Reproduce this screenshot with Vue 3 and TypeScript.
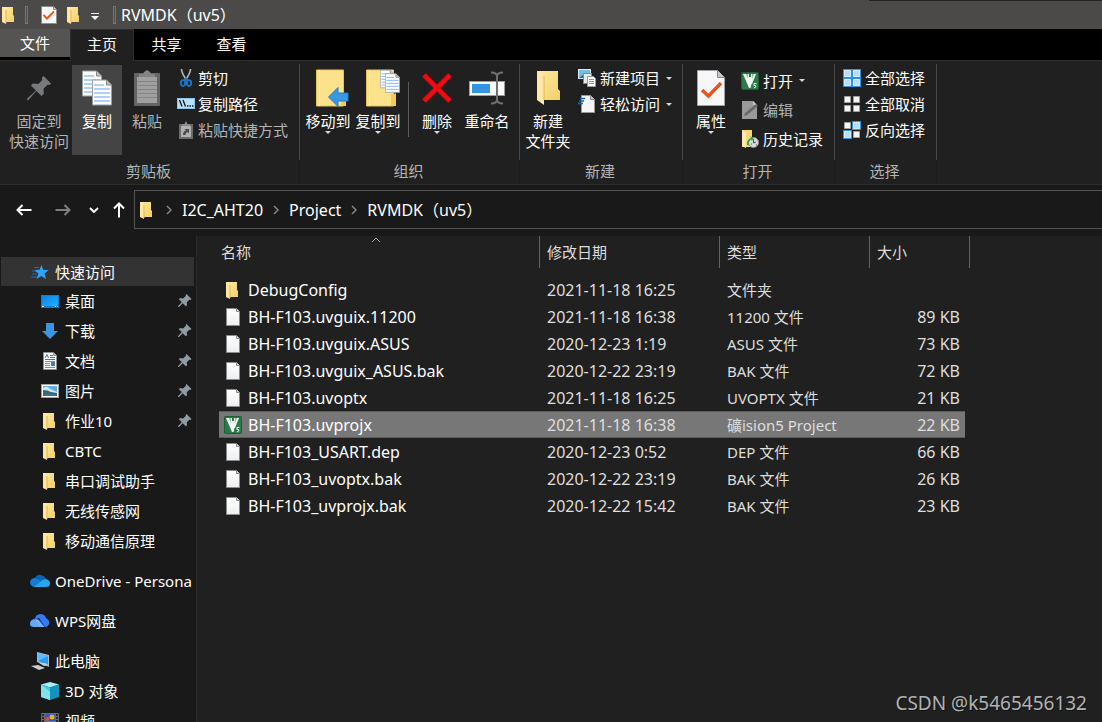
<script setup lang="ts">
import { ref } from 'vue'

interface NavItem {
  label: string
  icon: string
  level: 1 | 2
  pinned?: boolean
  gap?: boolean
}

interface FileRow {
  name: string
  icon: string
  date: string
  type: string
  size: string
}

const tabs: string[] = ['主页', '共享', '查看']
const crumbs: string[] = ['I2C_AHT20', 'Project', 'RVMDK（uv5）']

const nav: NavItem[] = [
  { label: '快速访问', icon: 'star', level: 1 },
  { label: '桌面', icon: 'desktop', level: 2, pinned: true },
  { label: '下载', icon: 'download', level: 2, pinned: true },
  { label: '文档', icon: 'document', level: 2, pinned: true },
  { label: '图片', icon: 'picture', level: 2, pinned: true },
  { label: '作业10', icon: 'folder', level: 2, pinned: true },
  { label: 'CBTC', icon: 'folder', level: 2 },
  { label: '串口调试助手', icon: 'folder', level: 2 },
  { label: '无线传感网', icon: 'folder', level: 2 },
  { label: '移动通信原理', icon: 'folder', level: 2 },
  { label: 'OneDrive - Persona', icon: 'onedrive', level: 1, gap: true },
  { label: 'WPS网盘', icon: 'wps', level: 1, gap: true },
  { label: '此电脑', icon: 'computer', level: 1, gap: true },
  { label: '3D 对象', icon: 'cube', level: 2 },
  { label: '视频', icon: 'video', level: 2 },
]

const files: FileRow[] = [
  { name: 'DebugConfig', icon: 'folder', date: '2021-11-18 16:25', type: '文件夹', size: '' },
  { name: 'BH-F103.uvguix.11200', icon: 'file', date: '2021-11-18 16:38', type: '11200 文件', size: '89 KB' },
  { name: 'BH-F103.uvguix.ASUS', icon: 'file', date: '2020-12-23 1:19', type: 'ASUS 文件', size: '73 KB' },
  { name: 'BH-F103.uvguix_ASUS.bak', icon: 'file', date: '2020-12-22 23:19', type: 'BAK 文件', size: '72 KB' },
  { name: 'BH-F103.uvoptx', icon: 'file', date: '2021-11-18 16:25', type: 'UVOPTX 文件', size: '21 KB' },
  { name: 'BH-F103.uvprojx', icon: 'keil', date: '2021-11-18 16:38', type: '礦ision5 Project', size: '22 KB' },
  { name: 'BH-F103_USART.dep', icon: 'file', date: '2020-12-23 0:52', type: 'DEP 文件', size: '66 KB' },
  { name: 'BH-F103_uvoptx.bak', icon: 'file', date: '2020-12-22 23:19', type: 'BAK 文件', size: '26 KB' },
  { name: 'BH-F103_uvprojx.bak', icon: 'file', date: '2020-12-22 15:42', type: 'BAK 文件', size: '23 KB' },
]

const activeTab = ref('主页')
const selected = ref('BH-F103.uvprojx')
</script>

<template>
  <div class="explorer">
    <svg class="sprite" aria-hidden="true">
      <defs>
        <linearGradient id="gFolder" x1="0" y1="0" x2="1" y2="1">
          <stop offset="0" stop-color="#ffe9a2" />
          <stop offset="1" stop-color="#f3cf66" />
        </linearGradient>
        <linearGradient id="gBlue" x1="0" y1="0" x2="1" y2="1">
          <stop offset="0" stop-color="#0a84e8" />
          <stop offset="1" stop-color="#1fb0ff" />
        </linearGradient>
        <linearGradient id="gPage" x1="0" y1="0" x2="0" y2="1">
          <stop offset="0" stop-color="#ffffff" />
          <stop offset="1" stop-color="#eceff1" />
        </linearGradient>
      </defs>
      <symbol id="folder" viewBox="0 0 18 18">
        <path d="M3 1h10v8l1 1v6H5z" fill="url(#gFolder)" />
        <path d="M2 1h2l2 3v14l-4-2z" fill="#ffe7a0" />
        <path d="M6 4v13" stroke="#dfb950" stroke-width="1" />
      </symbol>
      <symbol id="file" viewBox="0 0 18 18">
        <path d="M2.500.5h10l3 3v14h-13z" fill="url(#gPage)" stroke="#8b8b8b" />
        <path d="M12.500.5v3h3" fill="#ddd" stroke="#8b8b8b" />
      </symbol>
      <symbol id="keil" viewBox="0 0 18 18">
        <rect width="18" height="18" rx="2" fill="#1c5e36" />
        <rect x="1" y="1" width="16" height="16" rx="1" fill="#2d7a49" />
        <path d="M2 2h3.500l1 5V2H8v3h2V2h1.500v5l1-5H15l-4 10H10.500l-1 4H8z" fill="#f2f7f3" />
        <path d="M15.500 11.500h-2.500v2h1.500q1.500 1.500-1.500 2.500" fill="none" stroke="#f2f7f3" />
      </symbol>
      <symbol id="propsSmall" viewBox="0 0 16 18">
        <path d="M.5.500h12l3 3v14H.500z" fill="#f7f7f8" stroke="#8b8b8b" />
        <path d="M12.500.5v3h3" fill="#ccc" stroke="#8b8b8b" />
        <path d="M2.500 9l3.500 3.500 7-7" fill="none" stroke="#e85a1c" stroke-width="2" />
      </symbol>
      <symbol id="pin" viewBox="0 0 14 14">
        <path d="M8.500 0l5 5-1.200 1-1-.3-2.500 2.500.3 3-1.300 1.100L4.700 9.200 1 13H0v-.8l3.800-4.100L.8 5.200l1.200-1.100 3 .3 3-2.600-.3-1z" fill="#8f9aa3" />
      </symbol>
      <symbol id="pinBig" viewBox="0 0 26 26">
        <path d="M17.500 1L25 8.500l-1.500 1.600-2-.4-4 4 .3 5.300-2.300 2.100-5.200-5L2.500 25l-1.500.2.300-1.600 8.600-8-5-5 2.100-2.100 5.300.4 4-4-.5-2.200z" fill="#77797b" />
      </symbol>
      <symbol id="sheet" viewBox="0 0 20 26">
        <path d="M.5.500h14l5 5v20H.500z" fill="#fafcff" stroke="#9a9a9a" />
        <path d="M14.500.5v5h5" fill="#bbb" stroke="#8b8b8b" />
        <path d="M2 5.500h10M2 9.500h16M2 13.500h16M2 17.500h16M2 21.500h16" stroke="#68a3ef" />
      </symbol>
      <symbol id="copy" viewBox="0 0 30 36">
        <use href="#sheet" x="0" y="0" width="20" height="27" />
        <use href="#sheet" x="10" y="9" width="20" height="27" />
      </symbol>
      <symbol id="paste" viewBox="0 0 26 36">
        <rect x="0" y="3" width="26" height="33" rx="1" fill="#656565" />
        <rect x="3" y="7" width="20" height="26" fill="#a0a0a0" />
        <path d="M3 11.500h20M3 15.500h20M3 19.500h20M3 23.500h20M3 27.500h20" stroke="#858585" />
        <path d="M5 7V4h4l1-2 3-2 3 2 1 2h4v3z" fill="#858585" />
      </symbol>
      <symbol id="cut" viewBox="0 0 18 18">
        <path d="M4.500 0q0 4 5 11M13.500 0q0 4-5 11" fill="none" stroke="#b6b9bc" stroke-width="1.600" />
        <ellipse cx="6" cy="14" rx="2.200" ry="2.800" fill="none" stroke="#1979c9" stroke-width="1.800" />
        <ellipse cx="12" cy="14" rx="2.200" ry="2.800" fill="none" stroke="#1979c9" stroke-width="1.800" />
        <path d="M7 12l2-2.500 2 2.500" fill="none" stroke="#1979c9" stroke-width="2" />
      </symbol>
      <symbol id="path" viewBox="0 0 18 18">
        <rect x=".5" y="3.500" width="17" height="10" fill="#b9e0fb" stroke="#8cc4ec" />
        <path d="M2.500 5l2.500 6.500M6 5l2.500 6.500M10 11h1.500M12.500 11h1.500M15 11h1.500" stroke="#1b1b1b" stroke-width="1.400" />
      </symbol>
      <symbol id="shortcut" viewBox="0 0 18 18">
        <path d="M2 3h14v15H2z" fill="#6c6c6c" />
        <path d="M4 5h10v11H4z" fill="#b1b1b1" />
        <path d="M5 5V3h2.500L9 0l1.500 3H13v2z" fill="#8c8c8c" />
        <path d="M6 14q0-4 3-4.500L7.500 8H12v4.500L10.500 11Q8.500 11.500 8.500 14z" fill="#4b4b4b" />
      </symbol>
      <symbol id="folderTall" viewBox="0 0 38 38">
        <path d="M.5 1h27v36H.500z" fill="#fde28c" stroke="#e8c25a" />
        <path d="M3.500 1v36" stroke="#ffeeb8" stroke-width="1" />
        <path d="M25 25h3l2-1v13h-5z" fill="#f1ca5b" />
      </symbol>
      <symbol id="moveTo" viewBox="0 0 38 38">
        <use href="#folderTall" width="38" height="38" />
        <path d="M12.500 28L22 18.500V24h10v8H22v5.500z" fill="#3798e5" stroke="#1f7ecb" />
      </symbol>
      <symbol id="copyTo" viewBox="0 0 38 38">
        <use href="#folderTall" y="0" width="38" height="38" />
        <use href="#sheet" x="14" y="0" width="14" height="20" />
        <use href="#sheet" x="19" y="4" width="15" height="20" />
      </symbol>
      <symbol id="delete" viewBox="0 0 30 30">
        <path d="M2 2l26 26M28 2L2 28" stroke="#a20b10" stroke-width="5.500" />
        <path d="M2 2l26 26M28 2L2 28" stroke="#ec0c13" stroke-width="4" />
      </symbol>
      <symbol id="rename" viewBox="0 0 36 34">
        <rect x=".5" y="10.500" width="35" height="14" fill="#f7f9fb" stroke="#9c9c9c" />
        <rect x="3" y="13" width="18" height="9" fill="#3395e4" />
        <path d="M22 1.500q6 0 6 4v23q0 4-6 4M34 1.500q-6 0-6 4v23q0 4 6 4" fill="none" stroke="#707070" stroke-width="2" />
      </symbol>
      <symbol id="newFolder" viewBox="0 0 24 36">
        <path d="M1 1h21v18l2 2v9H7z" fill="url(#gFolder)" />
        <path d="M1 1l7 5v29l-7-5z" fill="#ffe8a5" />
        <path d="M8 6v24" stroke="#dcb84f" />
      </symbol>
      <symbol id="newItem" viewBox="0 0 18 18">
        <rect x=".5" y=".5" width="12" height="9" fill="#76bce8" stroke="#d9edf8" />
        <path d="M1 9l5-4 4 4z" fill="#286e7a" />
        <rect x="5.500" y="4.500" width="8" height="10" fill="#e8ebed" stroke="#888" />
        <path d="M9.500 7.500h6l2 2v8h-8z" fill="#fff" stroke="#999" />
        <path d="M11 10.500h5M11 12.500h5M11 14.500h5" stroke="#8d91bd" />
      </symbol>
      <symbol id="easy" viewBox="0 0 18 18">
        <path d="M3.500.5h9l4 4v13h-13z" fill="#f4f6f7" stroke="#999" />
        <path d="M12.500.5v4h4" fill="#ccc" stroke="#888" />
        <path d="M2 3.500h5M1 6h5M0 8.500h5" stroke="#1767ad" stroke-width="1.400" />
      </symbol>
      <symbol id="properties" viewBox="0 0 28 36">
        <path d="M.5.500h20l7 7v28H.500z" fill="#f7f7f9" stroke="#a3a3a3" />
        <path d="M20.500.5v7h7" fill="#c7c7c7" stroke="#898989" />
        <path d="M5 20l6.500 6L24 13" fill="none" stroke="#e8551a" stroke-width="3.500" />
      </symbol>
      <symbol id="edit" viewBox="0 0 18 18">
        <path d="M1 0h11l4 4v14H1z" fill="#999" />
        <path d="M12 0v4h4" fill="#c5c5c5" />
        <path d="M3 15l1-3L15 3l2 2L6 14z" fill="#696969" />
      </symbol>
      <symbol id="history" viewBox="0 0 18 18">
        <path d="M1 0h10v17H1z" fill="#f7d87c" />
        <path d="M1 0l4 3v15l-4-2z" fill="#ffebae" />
        <circle cx="12.500" cy="12.500" r="5" fill="#d9dcdd" stroke="#8c9092" />
        <path d="M12.500 9v4l2.500-1M10 14h1M15 15h1" stroke="#555" fill="none" />
        <path d="M6 15q-1-5 4-7l-1-1.500 4 1-2 3.500-1-1.500q-3 2-2 6z" fill="#34a845" />
      </symbol>
      <symbol id="selectAll" viewBox="0 0 18 18">
        <rect width="18" height="18" fill="#3292e0" />
        <path d="M1.500 1.500h6v6h-6zM10.500 1.500h6v6h-6zM1.500 10.500h6v6h-6zM10.500 10.500h6v6h-6z" fill="#b7ddfb" stroke="#d8edfe" />
      </symbol>
      <symbol id="selectNone" viewBox="0 0 18 18">
        <path d="M1.500 1.500h6v6h-6zM10.500 1.500h6v6h-6zM1.500 10.500h6v6h-6zM10.500 10.500h6v6h-6z" fill="#f5f5f5" stroke="#a0a0a0" />
      </symbol>
      <symbol id="selectInvert" viewBox="0 0 18 18">
        <path d="M1.500 1.500h6v6h-6zM10.500 10.500h6v6h-6z" fill="#f5f5f5" stroke="#a0a0a0" />
        <path d="M9 0h9v9H9zM0 9h9v9H0z" fill="#3292e0" />
        <path d="M10.500 1.500h6v6h-6zM1.500 10.500h6v6h-6z" fill="#b7ddfb" stroke="#d8edfe" />
      </symbol>
      <symbol id="star" viewBox="0 0 18 18">
        <path d="M10.500 2l1.700 4.700 5.500.3-4.200 3.600 1.700 5.400-4.900-3-4.800 3 2-5.500L3 7l5.500-.3z" fill="#2fa5f2" />
        <path d="M3 4.500h5M1 8h4M1 11h5M0 14h6" stroke="#1371b8" stroke-width="1" />
      </symbol>
      <symbol id="desktop" viewBox="0 0 18 18">
        <rect x="0" y="3" width="18" height="13" fill="#0b7fda" />
        <rect x="1" y="4" width="16" height="10" fill="url(#gBlue)" />
        <path d="M1 14.500h2M14 14.500h1M16 14.500h1" stroke="#e6f5ff" />
      </symbol>
      <symbol id="download" viewBox="0 0 18 18">
        <path d="M5 1h8v8h4l-8 8-8-8h4z" fill="#3a96e2" />
      </symbol>
      <symbol id="document" viewBox="0 0 18 18">
        <path d="M2.500.5h10l3 3v14h-13z" fill="#f7f9fa" stroke="#919191" />
        <path d="M12.500.5v3h3" fill="#ccc" stroke="#919191" />
        <path d="M4 6l2-3.500L7.500 6M9 3.500h3M9 5.500h5M4 7.500h10" fill="none" stroke="#2480c4" />
        <path d="M4 9.500h10M4 11.500h5M4 13.500h5M4 15.500h10" stroke="#8a8a8a" />
        <path d="M10 10h4v4h-4z" fill="#457da4" />
      </symbol>
      <symbol id="picture" viewBox="0 0 18 18">
        <rect x=".5" y="2.500" width="17" height="13" fill="#fff" stroke="#a3a3a3" />
        <rect x="2" y="4" width="14" height="10" fill="#65aee4" />
        <path d="M2 6q4-3 7 1l7 3v2H2z" fill="#d5eaf3" />
        <path d="M2 8q5 0 8 2l6 1v3H2z" fill="#356b68" />
        <path d="M2 12h14v2H2z" fill="#3a6f9b" />
      </symbol>
      <symbol id="onedrive" viewBox="0 0 20 18">
        <path d="M5 6q2-4 6-3 4 1 5 4l-7 6z" fill="#0864b4" />
        <path d="M4 15q-4-1-4-5 1-4 5-4l4 2 5 6z" fill="#127cd6" />
        <path d="M16 7q4 1 4 4.500T16 15H4l6-5q3-3 6-3z" fill="#29a5ee" />
      </symbol>
      <symbol id="wps" viewBox="0 0 20 18">
        <path d="M5 7q0-4 5-5 5 0 6 4 4 2 3 6-1 3-4 3L9 6z" fill="#337bf5" />
        <path d="M4 7q4-2 6 2l5 6H9L5 10z" fill="#72b1fb" />
        <path d="M4 7q-4 1-4 5 0 3 4 3h5z" fill="#63a8f9" />
        <path d="M4 7q3-1 5 1l6 7" fill="none" stroke="#1c4fb5" />
      </symbol>
      <symbol id="computer" viewBox="0 0 20 18">
        <path d="M7 0l12 3v12L7 10z" fill="#b0bac0" />
        <path d="M8 1.500l10 2.500v9L8 9z" fill="#2a9df1" />
        <path d="M8 1.500l10 2.500-10 5z" fill="#5bbcff" />
        <path d="M1 14l7-1 7 3-6 2zM9 11h6l3 2-4 1z" fill="#c8ced2" />
      </symbol>
      <symbol id="cube" viewBox="0 0 18 18">
        <path d="M9 0l9 2.500-9 3-9-3z" fill="#a3effa" />
        <path d="M0 2.500l9 3V18l-9-3z" fill="#45cfe0" />
        <path d="M18 2.500l-9 3V18l9-3z" fill="#1494bd" />
        <path d="M0 2.500L9 10v8l-9-3z" fill="#7fe4ee" />
      </symbol>
      <symbol id="video" viewBox="0 0 18 18">
        <rect x="0" y="1" width="18" height="16" fill="#6a6a6a" />
        <path d="M1 3h2M1 6h2M1 9h2M1 12h2M15 3h2M15 6h2M15 9h2M15 12h2" stroke="#151515" stroke-width="1.500" />
        <rect x="4" y="2" width="10" height="14" fill="#3457b8" />
        <circle cx="11" cy="5" r="2.500" fill="#e9b02d" />
        <circle cx="6.500" cy="7" r="2" fill="#d95248" />
        <path d="M4 9h10v4H4z" fill="#419a49" />
      </symbol>
    </svg>

    <header class="titlebar">
      <svg class="i18"><use href="#folder" /></svg>
      <span class="tick"></span>
      <button class="quick" aria-label="属性"><svg class="i18"><use href="#propsSmall" /></svg></button>
      <button class="quick" aria-label="新建文件夹"><svg class="i18"><use href="#folder" /></svg></button>
      <button class="quick small" aria-label="自定义快速访问工具栏">
        <svg width="8" height="8" viewBox="0 0 8 8"><path d="M0 .5h8" stroke="#fff" /><path d="M0 3h8L4 7z" fill="#fff" /></svg>
      </button>
      <span class="tick"></span>
      <h1 class="title">RVMDK（uv5）</h1>
    </header>

    <nav class="tabs">
      <button class="tab file-tab">文件</button>
      <button
        v-for="tab in tabs"
        :key="tab"
        class="tab"
        :class="{ active: tab === activeTab }"
        @click="activeTab = tab"
      >{{ tab }}</button>
    </nav>

    <section class="ribbon">
      <div class="group clipboard">
        <div class="body">
          <button class="big wide muted"><span class="art"><svg width="26" height="26"><use href="#pinBig" /></svg></span>固定到<br />快速访问</button>
          <button class="big hover"><span class="art"><svg width="30" height="36"><use href="#copy" /></svg></span>复制</button>
          <button class="big muted"><span class="art"><svg width="26" height="36"><use href="#paste" /></svg></span>粘贴</button>
          <div class="stack">
            <button class="line"><svg class="i18"><use href="#cut" /></svg>剪切</button>
            <button class="line"><svg class="i18"><use href="#path" /></svg>复制路径</button>
            <button class="line muted"><svg class="i18"><use href="#shortcut" /></svg>粘贴快捷方式</button>
          </div>
        </div>
        <div class="caption">剪贴板</div>
      </div>

      <div class="group organize">
        <div class="body">
          <button class="big"><span class="art"><svg class="shift" width="38" height="38"><use href="#moveTo" /></svg></span>移动到<i class="caret"></i></button>
          <button class="big"><span class="art"><svg class="shift" width="38" height="38"><use href="#copyTo" /></svg></span>复制到<i class="caret"></i></button>
          <span class="rule"></span>
          <button class="big"><span class="art"><svg width="30" height="30"><use href="#delete" /></svg></span>删除<i class="caret"></i></button>
          <button class="big"><span class="art"><svg width="36" height="34"><use href="#rename" /></svg></span>重命名</button>
        </div>
        <div class="caption">组织</div>
      </div>

      <div class="group create">
        <div class="body">
          <button class="big"><span class="art"><svg width="24" height="36"><use href="#newFolder" /></svg></span>新建<br />文件夹</button>
          <div class="stack">
            <button class="line"><svg class="i18"><use href="#newItem" /></svg>新建项目<i class="caret"></i></button>
            <button class="line"><svg class="i18"><use href="#easy" /></svg>轻松访问<i class="caret"></i></button>
          </div>
        </div>
        <div class="caption">新建</div>
      </div>

      <div class="group open">
        <div class="body">
          <button class="big"><span class="art"><svg width="28" height="36"><use href="#properties" /></svg></span>属性<i class="caret"></i></button>
          <div class="stack roomy">
            <button class="line"><svg class="i18"><use href="#keil" /></svg>打开<i class="caret"></i></button>
            <button class="line muted"><svg class="i18"><use href="#edit" /></svg>编辑</button>
            <button class="line"><svg class="i18"><use href="#history" /></svg>历史记录</button>
          </div>
        </div>
        <div class="caption">打开</div>
      </div>

      <div class="group select">
        <div class="body">
          <div class="stack">
            <button class="line"><svg class="i18"><use href="#selectAll" /></svg>全部选择</button>
            <button class="line"><svg class="i18"><use href="#selectNone" /></svg>全部取消</button>
            <button class="line"><svg class="i18"><use href="#selectInvert" /></svg>反向选择</button>
          </div>
        </div>
        <div class="caption">选择</div>
      </div>
    </section>

    <div class="addressbar">
      <div class="arrows">
        <button aria-label="后退"><svg width="16" height="12" viewBox="0 0 16 12"><path d="M15.500 6H1.500M6.500 1l-5 5 5 5" fill="none" stroke="#fff" stroke-width="2" /></svg></button>
        <button aria-label="前进"><svg width="16" height="12" viewBox="0 0 16 12"><path d="M.5 6h14M9.500 1l5 5-5 5" fill="none" stroke="#7f7f7f" stroke-width="2" /></svg></button>
        <button class="narrow" aria-label="最近浏览的位置"><svg width="10" height="6" viewBox="0 0 10 6"><path d="M1 1l4 4 4-4" fill="none" stroke="#fff" stroke-width="2" /></svg></button>
        <button class="narrow" aria-label="上移"><svg width="12" height="16" viewBox="0 0 12 16"><path d="M6 15.500V1.500M1 6.500l5-5 5 5" fill="none" stroke="#fff" stroke-width="2" /></svg></button>
      </div>
      <div class="crumbs">
        <svg class="i18"><use href="#folder" /></svg>
        <template v-for="crumb in crumbs" :key="crumb">
          <svg class="chevron" width="6" height="10" viewBox="0 0 6 10"><path d="M1 1l4 4-4 4" fill="none" stroke="#858585" stroke-width="1.500" /></svg>
          <a href="#">{{ crumb }}</a>
        </template>
      </div>
    </div>

    <main class="content">
      <aside class="sidebar">
        <a
          v-for="item in nav"
          :key="item.label"
          href="#"
          class="nav"
          :class="{ deep: item.level === 2, gap: item.gap, current: item.icon === 'star' }"
        >
          <svg class="nav-icon"><use :href="'#' + item.icon" /></svg>
          <span class="nav-label">{{ item.label }}</span>
          <svg v-if="item.pinned" class="pin"><use href="#pin" /></svg>
        </a>
      </aside>

      <section class="pane">
        <table class="files">
          <colgroup>
            <col class="c-name" /><col class="c-date" /><col class="c-type" /><col class="c-size" /><col class="c-end" />
          </colgroup>
          <thead>
            <tr>
              <th class="first">
                <div class="head">名称
                  <svg class="sort" width="10" height="6" viewBox="0 0 10 6"><path d="M1 5l4-4 4 4" fill="none" stroke="#a8a8a8" /></svg>
                </div>
              </th>
              <th><div class="head">修改日期</div></th>
              <th><div class="head">类型</div></th>
              <th colspan="2"><div class="head">大小</div></th>
            </tr>
          </thead>
          <tbody>
            <tr
              v-for="file in files"
              :key="file.name"
              :class="{ selected: file.name === selected }"
              @click="selected = file.name"
            >
              <td class="name"><div class="name-box"><svg class="i18"><use :href="'#' + file.icon" /></svg>{{ file.name }}</div></td>
              <td class="date">{{ file.date }}</td>
              <td>{{ file.type }}</td>
              <td class="size">{{ file.size }}</td>
              <td class="end"></td>
            </tr>
          </tbody>
        </table>
      </section>
    </main>

    <div class="watermark">CSDN @k5465456132</div>
  </div>
</template>

<style>
html,
body {
  background: #191919;
  overflow: hidden;
}
</style>

<style scoped>
.explorer {
  position: relative;
  display: flex;
  flex-direction: column;
  height: 100vh;
  overflow: hidden;
  background: #191919;
  color: #fff;
  font: 15px/20px "Noto Sans", "Noto Sans CJK SC", sans-serif;
}

* {
  box-sizing: border-box;
}

button {
  padding: 0;
  border: 0;
  background: none;
  color: inherit;
  font: inherit;
  white-space: nowrap;
}

a {
  color: inherit;
  text-decoration: none;
}

svg {
  flex: none;
}

.sprite {
  position: absolute;
  width: 0;
  height: 0;
}

.i18 {
  display: block;
  width: 18px;
  height: 18px;
}

.muted {
  color: #b4b4b4;
}

.titlebar {
  position: relative;
  display: flex;
  flex: none;
  align-items: center;
  height: 29px;
  background: #4b4a48;
}

/* edge of the window behind */
.titlebar::after {
  content: "";
  position: absolute;
  top: 0;
  right: 0;
  width: 233px;
  height: 1px;
  background: #252423;
}

.tick {
  width: 3px;
  height: 18px;
  margin: 0 12px 0 7px;
  border: 1px solid #777674;
}

.quick {
  margin-right: 7px;
}

.quick.small {
  width: 10px;
  margin-right: 6px;
}

.small + .tick {
  margin-right: 5px;
}

.title {
  margin: 0;
  font-size: 16px;
  font-weight: 400;
}

.tabs {
  position: relative;
  display: flex;
  flex: none;
  height: 31px;
  background: #000;
}

.tab {
  width: 65px;
  height: 31px;
  padding-bottom: 2px;
}

.file-tab {
  width: 70px;
  height: 28px;
  padding-bottom: 0;
  background: #555452;
}

.tab.active {
  height: 32px;
  width: 64px;
  padding-bottom: 3px;
  border: 1px solid #2e2e2e;
  border-bottom: 0;
  background: #202020;
}

.ribbon {
  display: flex;
  flex: none;
  height: 125px;
  padding-top: 3px;
  background: #202020;
  border-top: 1px solid #2e2e2e;
  border-bottom: 1px solid #2e2e2e;
}

.body {
  display: flex;
  height: 96px;
  padding: 1px 0 0 3px;
  border-right: 1px solid #484848;
}

.group {
  flex: none;
}

.clipboard {
  width: 300px;
}

.clipboard .body {
  padding-left: 6px;
}

.organize {
  width: 220px;
}

.create {
  width: 163px;
}

.open {
  width: 152px;
}

.select {
  width: 102px;
}

.caption {
  height: 24px;
  padding-right: 2px;
  color: #b4b4b4;
  line-height: 22px;
  text-align: center;
  border-right: 1px solid #1b1b1b;
}

.big {
  display: flex;
  flex: none;
  flex-direction: column;
  align-items: center;
  width: 50px;
  height: 90px;
  padding-top: 3px;
}

.big.wide {
  width: 66px;
}

.big.hover {
  background: #444;
}

.art {
  display: flex;
  align-items: center;
  justify-content: center;
  height: 43px;
  padding-bottom: 3px;
}

.shift {
  margin-left: 14px;
}

.caret {
  width: 0;
  height: 0;
  border: 3px solid transparent;
  border-top-color: #d8d8d8;
  border-bottom: 0;
}

.stack {
  display: flex;
  flex: none;
  flex-direction: column;
  padding-left: 5px;
}

.line {
  display: flex;
  align-items: center;
  gap: 4px;
  height: 26px;
}

.clipboard .line {
  gap: 3px;
}

.roomy {
  padding-top: 1px;
}

.roomy .line {
  height: 29px;
}

.line .caret {
  margin-left: 2px;
}

.rule {
  width: 1px;
  height: 55px;
  margin: 17px 3px 0 5px;
  background: #5a5a5a;
}

.addressbar {
  display: flex;
  flex: none;
  height: 51px;
  padding: 5px 0 7px;
}

.arrows {
  display: flex;
  flex: none;
  align-items: center;
  width: 134px;
  padding-left: 4px;
}

.arrows button {
  display: flex;
  align-items: center;
  justify-content: center;
  width: 39px;
  height: 28px;
}

.arrows .narrow {
  width: 24px;
}

.arrows .narrow:last-child {
  width: 26px;
}

.crumbs {
  display: flex;
  flex: 1;
  align-items: center;
  border: 1px solid #535353;
  border-right: 0;
  padding-left: 3px;
  font-size: 16px;
}

.chevron {
  margin: 0 10px;
}

.content {
  display: flex;
  flex: 1;
  min-height: 0;
}

.sidebar {
  flex: none;
  width: 195px;
  padding-top: 21px;
  overflow: hidden;
}

.nav {
  display: flex;
  align-items: center;
  height: 30px;
  padding-left: 30px;
  white-space: nowrap;
}

.nav.current {
  height: 29px;
  margin: 0 1px;
  padding-left: 29px;
  background: #333;
}

.nav.deep {
  padding-left: 40px;
}

.nav.gap {
  margin-top: 10px;
}

.nav-icon {
  width: 20px;
  height: 18px;
  margin-right: 5px;
}

.nav-label {
  flex: 1;
}

.pin {
  width: 14px;
  height: 14px;
  margin-right: 3px;
}

.pane {
  flex: 1;
  margin-left: 1px;
  padding-left: 22px;
  background: #202020;
  border-left: 1px solid #2b2b2b;
}

.files {
  width: 751px;
  border-spacing: 0;
  table-layout: fixed;
  color: #dedede;
}

.c-name {
  width: 321px;
}

.c-date {
  width: 180px;
}

.c-type {
  width: 150px;
}

.c-size {
  width: 95px;
}

.c-end {
  width: 5px;
}

th {
  height: 40px;
  padding: 0;
  font-weight: 400;
  text-align: left;
  vertical-align: top;
}

.head {
  position: relative;
  height: 32px;
  padding-left: 7px;
  line-height: 32px;
  border-right: 1px solid #636363;
}

.first .head {
  padding-left: 2px;
}

.sort {
  position: absolute;
  top: 1px;
  left: calc(50% - 8px);
}

td {
  height: 27px;
  padding: 0 0 0 7px;
  white-space: nowrap;
}

.name {
  padding-left: 5px;
  color: #fff;
}

.name,
.date,
.size {
  font-size: 16px;
}

.name-box {
  display: flex;
  align-items: center;
  gap: 6px;
}

.size {
  padding-right: 5px;
  text-align: right;
}

.end {
  padding: 0;
}

.selected td:not(.end) {
  background: #777;
  box-shadow: inset 0 1px #5c5c5c, inset 0 -1px #5c5c5c;
}

.watermark {
  position: absolute;
  right: 15px;
  bottom: 6px;
  color: #b3b3b3;
  font-size: 19px;
  line-height: 26px;
  text-shadow: 1px 1px #111;
}
</style>
